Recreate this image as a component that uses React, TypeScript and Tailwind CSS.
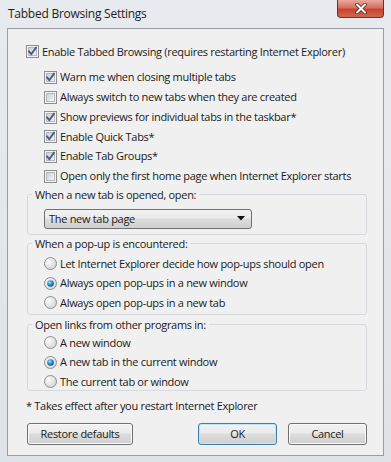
import React from 'react'

const font = { fontFamily: '"Open Sans", "Noto Sans", sans-serif' }

function CheckBox({ checked }: { checked: boolean }) {
  return (
    <svg width="13" height="13" viewBox="0 0 13 13" className="shrink-0">
      <defs>
        <linearGradient id="cbFill" x1="0" y1="0" x2="1" y2="1">
          <stop offset="0" stopColor="#cbcfd5" />
          <stop offset="1" stopColor="#f7f7f7" />
        </linearGradient>
      </defs>
      <rect x="0.5" y="0.5" width="12" height="12" fill="#f4f4f4" stroke="#8e8f8f" />
      <rect x="2.5" y="2.5" width="8" height="8" fill="url(#cbFill)" stroke="#b4b7bb" />
      {checked && (
        <path d="M3 6.3 L5.3 9.2 L10 2.6" fill="none" stroke="#4a5c8a" strokeWidth="1.9" strokeLinecap="round" strokeLinejoin="round" />
      )}
    </svg>
  )
}

function Radio({ checked }: { checked: boolean }) {
  return (
    <svg width="13" height="13" viewBox="0 0 13 13" className="shrink-0">
      <defs>
        <radialGradient id="rdFill" cx="0.35" cy="0.35" r="0.7">
          <stop offset="0" stopColor="#fbfbfb" />
          <stop offset="1" stopColor="#d2d4d7" />
        </radialGradient>
        <radialGradient id="rdDot" cx="0.4" cy="0.35" r="0.7">
          <stop offset="0" stopColor="#b6e3fa" />
          <stop offset="0.5" stopColor="#2c8ccb" />
          <stop offset="1" stopColor="#0e4e87" />
        </radialGradient>
      </defs>
      <circle cx="6.5" cy="6.5" r="6" fill="url(#rdFill)" stroke="#8e8f8f" />
      {checked && <circle cx="6.5" cy="6.5" r="3.3" fill="url(#rdDot)" />}
    </svg>
  )
}

function CheckRow({ checked, label, sub }: { checked: boolean; label: string; sub?: boolean }) {
  return (
    <div className={`flex items-center h-[19.8px] gap-[3px] ${sub ? 'pl-[17px]' : '-ml-[1px]'}`}>
      <CheckBox checked={checked} />
      <span className="whitespace-nowrap">{label}</span>
    </div>
  )
}

function RadioRow({ checked, label }: { checked: boolean; label: string }) {
  return (
    <div className="flex items-center h-[16px] gap-[3px] pl-[16px]">
      <Radio checked={checked} />
      <span className="whitespace-nowrap">{label}</span>
    </div>
  )
}

function Group({ title, children, className }: { title: string; children: React.ReactNode; className?: string }) {
  return (
    <fieldset className={`border border-[#d5d9de] rounded-[3px] ${className ?? ''}`}>
      <legend className="ml-[4px] px-[3px] h-[14px] leading-[14px] whitespace-nowrap">{title}</legend>
      {children}
    </fieldset>
  )
}

function Button({ label, primary, className }: { label: string; primary?: boolean; className?: string }) {
  return (
    <button
      className={`h-[22px] rounded-[3px] border ${primary ? 'border-[#3c7fb1] shadow-[inset_0_0_0_1px_#bfe4f8]' : 'border-[#707070] shadow-[inset_0_0_0_1px_#fbfbfb]'} bg-[linear-gradient(#f2f2f2_0%,#ebebeb_45%,#dddddd_50%,#cfcfcf_100%)] text-[#1a1a1a] leading-none ${className ?? ''}`}
    >
      {label}
    </button>
  )
}

export default function App() {
  return (
    <div className="w-[391px] h-[462px] bg-[linear-gradient(180deg,#e7eaee_0%,#dfe3e8_100%)] overflow-hidden text-[11px] tracking-[-0.3px] text-[#1a1a1a]" style={font}>
      {/* Title bar */}
      <div className="flex justify-between h-[28px]">
        <div className="pl-[8px] pt-[5px] text-[12px] leading-[18px] tracking-[-0.25px] text-[#1e1e1e]">Tabbed Browsing Settings</div>
        <div className="mr-[7px] w-[47px] h-[18px] rounded-b-[4px] border border-t-0 border-[#7d2a22] bg-[linear-gradient(#e9a99c_0%,#d67060_45%,#c7432f_55%,#d2674f_100%)] flex items-center justify-center">
          <svg width="12" height="11" viewBox="0 0 12 11">
            <path d="M2 1.5 L10 9.5 M10 1.5 L2 9.5" stroke="#5a1f18" strokeWidth="3.6" strokeLinecap="round" />
            <path d="M2 1.5 L10 9.5 M10 1.5 L2 9.5" stroke="#ffffff" strokeWidth="2" strokeLinecap="round" />
          </svg>
        </div>
      </div>

      {/* Client area */}
      <div className="mx-[7px] h-[428px] border border-[#9a9ea4] bg-[#f0f0f0] pt-[13px] pl-[19px] pr-[16px]">
        <CheckRow checked label="Enable Tabbed Browsing (requires restarting Internet Explorer)" />
        <div className="mt-[5.8px]">
          <CheckRow sub checked label="Warn me when closing multiple tabs" />
          <CheckRow sub checked={false} label="Always switch to new tabs when they are created" />
          <CheckRow sub checked label="Show previews for individual tabs in the taskbar*" />
          <CheckRow sub checked label="Enable Quick Tabs*" />
          <CheckRow sub checked label="Enable Tab Groups*" />
          <CheckRow sub checked={false} label="Open only the first home page when Internet Explorer starts" />
        </div>

        <Group title="When a new tab is opened, open:" className="mt-[1.6px] pb-[5px]">
          <div className="mt-[7px] ml-[16px] w-[208px] h-[20px] rounded-[3px] border border-[#707070] bg-[linear-gradient(#f2f2f2_0%,#ebebeb_45%,#dddddd_50%,#cfcfcf_100%)] flex items-center justify-between pl-[4px] pr-[6px]">
            <span>The new tab page</span>
            <svg width="8" height="5" viewBox="0 0 8 5">
              <path d="M0 0 H8 L4 4.5 Z" fill="#111" />
            </svg>
          </div>
        </Group>

        <Group title="When a pop-up is encountered:" className="mt-[2px] pb-[3px]">
          <div className="mt-[5px] flex flex-col gap-[3.5px]">
            <RadioRow checked={false} label="Let Internet Explorer decide how pop-ups should open" />
            <RadioRow checked label="Always open pop-ups in a new window" />
            <RadioRow checked={false} label="Always open pop-ups in a new tab" />
          </div>
        </Group>

        <Group title="Open links from other programs in:" className="mt-[3px] pb-[0px]">
          <div className="mt-[3px] flex flex-col gap-[3.5px]">
            <RadioRow checked={false} label="A new window" />
            <RadioRow checked label="A new tab in the current window" />
            <RadioRow checked={false} label="The current tab or window" />
          </div>
        </Group>

        <div className="mt-[8px] h-[14px] leading-[14px] -ml-[1px]">* Takes effect after you restart Internet Explorer</div>

        <div className="mt-[10px] flex">
          <Button label="Restore defaults" className="w-[106px]" />
          <Button label="OK" primary className="ml-auto w-[79px]" />
          <Button label="Cancel" className="ml-[11px] w-[79px]" />
        </div>
      </div>
    </div>
  )
}
